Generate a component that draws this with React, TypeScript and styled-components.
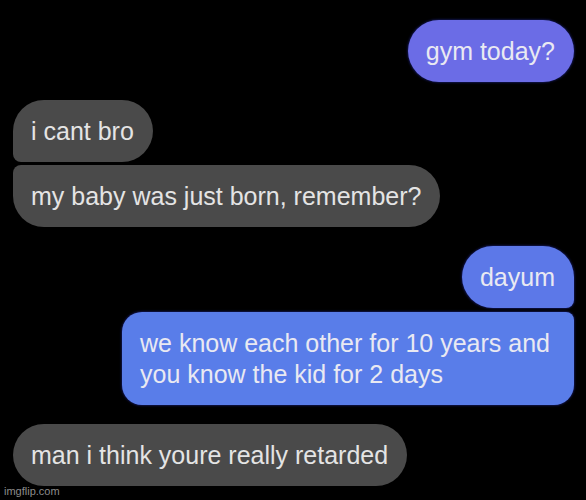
import styled, { createGlobalStyle } from "styled-components";

type Side = "in" | "out";

type IMessage = {
  side: Side;
  text: string;
  gap: number;
  radius: string;
  tone?: string;
};

const messages: IMessage[] = [
  { side: "out", text: "gym today?", gap: 0, radius: "31px", tone: "#6b6ce6" },
  { side: "in", text: "i cant bro", gap: 18, radius: "31px 31px 31px 8px" },
  {
    side: "in",
    text: "my baby was just born, remember?",
    gap: 3,
    radius: "8px 31px 31px 31px",
  },
  { side: "out", text: "dayum", gap: 19, radius: "31px 31px 8px 31px", tone: "#5c78e8" },
  {
    side: "out",
    text: "we know each other for 10 years and you know the kid for 2 days",
    gap: 4,
    radius: "20px 8px 20px 20px",
    tone: "#597de9",
  },
  { side: "in", text: "man i think youre really retarded", gap: 19, radius: "31px" },
];

const GlobalStyle = createGlobalStyle`
  html, body {
    margin: 0;
    padding: 0;
    background: #000;
  }
`;

export default function App() {
  return (
    <>
      <GlobalStyle />
      <StyledScreen>
        {messages.map((message, i) => (
          <StyledRow key={i} $side={message.side} $gap={message.gap}>
            <StyledBubble
              $side={message.side}
              $radius={message.radius}
              $tone={message.tone}
            >
              {message.text}
            </StyledBubble>
          </StyledRow>
        ))}
        <StyledWatermark>imgflip.com</StyledWatermark>
      </StyledScreen>
    </>
  );
}

const StyledScreen = styled.div`
  position: relative;
  box-sizing: border-box;
  width: 586px;
  height: 500px;
  padding: 20px 12px 0 13px;
  display: flex;
  flex-direction: column;
  background: #000;
  font-family: "Liberation Sans", Arial, sans-serif;
  overflow: hidden;
`;

const StyledRow = styled.div<{ $side: Side; $gap: number }>`
  display: flex;
  justify-content: ${({ $side }) => ($side === "out" ? "flex-end" : "flex-start")};
  margin-top: ${({ $gap }) => $gap}px;
`;

const StyledBubble = styled.div<{ $side: Side; $radius: string; $tone?: string }>`
  box-sizing: border-box;
  max-width: 452px;
  padding: 16px 19px 15px 18px;
  border-radius: ${({ $radius }) => $radius};
  background: ${({ $side, $tone }) => ($side === "out" ? $tone : "#4a4a4a")};
  color: ${({ $side }) => ($side === "out" ? "#e9e9f2" : "#e4e4e4")};
  font-size: 25px;
  line-height: 31px;
  box-shadow: ${({ $side }) =>
    $side === "out" ? "0 0 2px 1px rgba(20, 24, 90, 0.8)" : "none"};
`;

const StyledWatermark = styled.div`
  position: absolute;
  left: 4px;
  bottom: 2px;
  font-size: 11px;
  line-height: 13px;
  color: #8c8c8c;
`;
